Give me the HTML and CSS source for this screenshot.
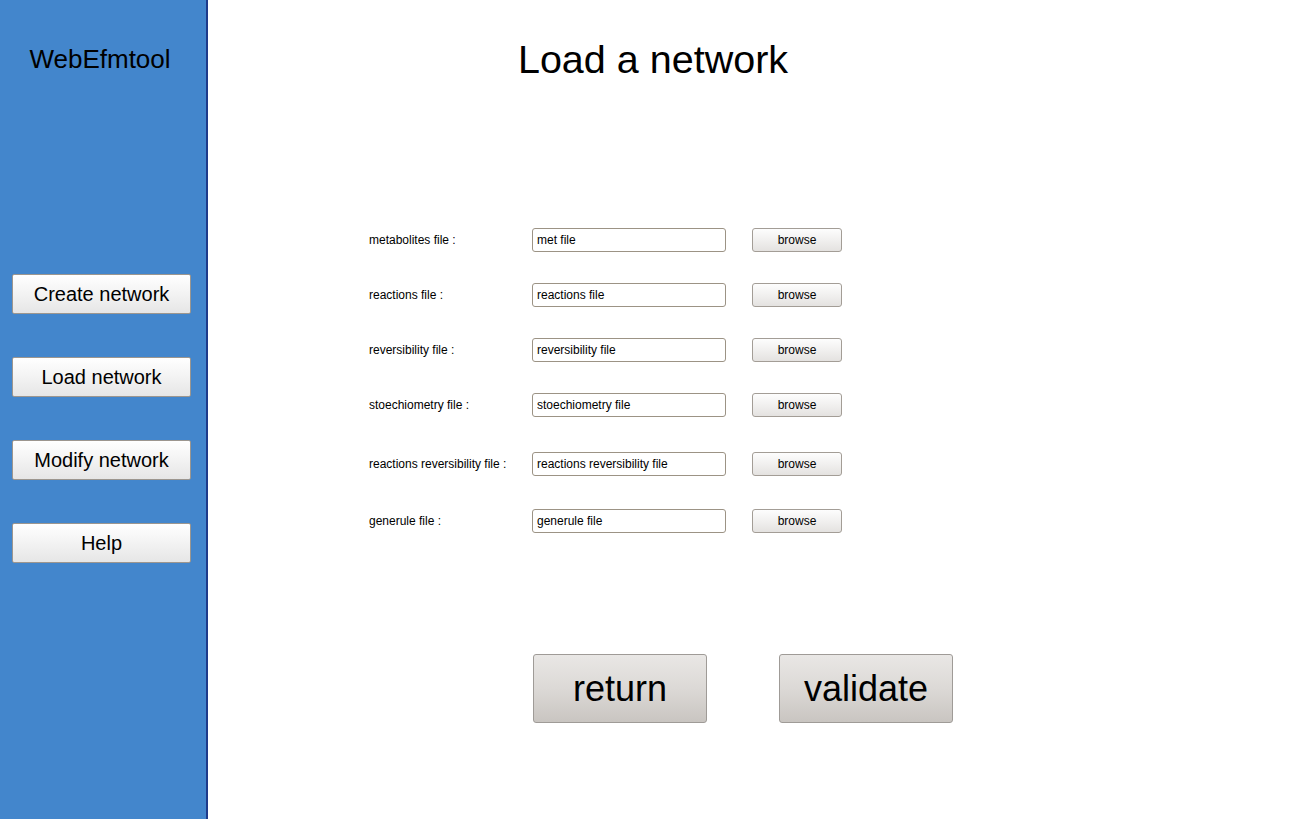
FILE: index.html
```html
<!DOCTYPE html>
<html lang="en">

<head>
    <meta charset="UTF-8">
    <meta name="viewport" content="width=device-width, initial-scale=1.0">
    <title>WebEfmtool - Load a network</title>
    <link rel="stylesheet" href="styles.css">
</head>

<body>
    <div class="page">
        <div class="sidebar">
            <p class="logo">WebEfmtool</p>
            <div class="nav">
                <button class="nav-btn" type="button">Create network</button>
                <button class="nav-btn" type="button">Load network</button>
                <button class="nav-btn" type="button">Modify network</button>
                <button class="nav-btn" type="button">Help</button>
            </div>
        </div>
        <div class="content">
            <h1 class="page-title">Load a network</h1>
            <form class="load-form">
                <div class="form-row">
                    <label class="field-label" for="met">metabolites file :</label>
                    <input id="met" class="field-input" type="text" value="met file">
                    <button class="browse" type="button">browse</button>
                </div>
                <div class="form-row">
                    <label class="field-label" for="reac">reactions file :</label>
                    <input id="reac" class="field-input" type="text" value="reactions file">
                    <button class="browse" type="button">browse</button>
                </div>
                <div class="form-row">
                    <label class="field-label" for="rev">reversibility file :</label>
                    <input id="rev" class="field-input" type="text" value="reversibility file">
                    <button class="browse" type="button">browse</button>
                </div>
                <div class="form-row">
                    <label class="field-label" for="sto">stoechiometry file :</label>
                    <input id="sto" class="field-input" type="text" value="stoechiometry file">
                    <button class="browse" type="button">browse</button>
                </div>
                <div class="form-row gap-wide">
                    <label class="field-label" for="rrev">reactions reversibility file :</label>
                    <input id="rrev" class="field-input" type="text" value="reactions reversibility file">
                    <button class="browse" type="button">browse</button>
                </div>
                <div class="form-row gap-mid">
                    <label class="field-label" for="gene">generule file :</label>
                    <input id="gene" class="field-input" type="text" value="generule file">
                    <button class="browse" type="button">browse</button>
                </div>
            </form>
            <div class="actions">
                <button class="big-btn" type="button">return</button>
                <button class="big-btn" type="button">validate</button>
            </div>
        </div>
    </div>
</body>

</html>
```

FILE: styles.css
```css
* {
    margin: 0;
    padding: 0;
    box-sizing: border-box;
}

body {
    font-family: "Liberation Sans", Arial, sans-serif;
    color: #000;
    background: #fff;
}

.page {
    display: flex;
    min-height: 100vh;
}

/* ---------- sidebar ---------- */

.sidebar {
    width: 208px;
    flex-shrink: 0;
    background: #4386cc;
    border-right: 2px solid #1f3b8a;
}

.sidebar .logo {
    padding: 44px 6px 0 0;
    height: 74px;
    font-size: 26px;
    line-height: 30px;
    text-align: center;
}

.sidebar .nav {
    display: flex;
    flex-direction: column;
    gap: 43px;
    margin-top: 200px;
    padding-left: 12px;
}

.nav-btn {
    width: 179px;
    height: 40px;
    font-family: inherit;
    font-size: 20px;
    color: #000;
    border: 1px solid #9c968f;
    border-radius: 2px;
    background: linear-gradient(#ffffff, #f4f4f4 45%, #e6e6e6);
    cursor: pointer;
}

/* ---------- content ---------- */

.content {
    flex: 1;
    padding-top: 36px;
}

.page-title {
    width: 890px;
    font-size: 39.5px;
    font-weight: normal;
    line-height: 46px;
    text-align: center;
}

.load-form {
    margin: 146px 0 0 161px;
}

.form-row {
    display: flex;
    align-items: center;
    height: 24px;
}

.form-row + .form-row {
    margin-top: 31px;
}

.form-row.gap-wide {
    margin-top: 35px;
}

.form-row.gap-mid {
    margin-top: 33px;
}

.field-label {
    width: 163px;
    font-size: 12px;
}

.field-input {
    width: 194px;
    height: 24px;
    margin-right: 26px;
    padding: 0 4px;
    font-family: inherit;
    font-size: 12px;
    color: #000;
    border: 1px solid #9c9385;
    border-radius: 3px;
    outline: none;
}

.browse {
    width: 90px;
    height: 24px;
    font-family: inherit;
    font-size: 12px;
    color: #000;
    border: 1px solid #a39d96;
    border-radius: 3px;
    background: linear-gradient(#fdfdfd, #f1f0ef 50%, #e4e2e0);
    cursor: pointer;
}

.actions {
    display: flex;
    gap: 72px;
    margin: 121px 0 0 325px;
}

.big-btn {
    width: 174px;
    height: 69px;
    font-family: inherit;
    font-size: 36px;
    color: #000;
    border: 1px solid #9f9b97;
    border-radius: 3px;
    background: linear-gradient(#e9e7e5, #dcd9d6 50%, #c9c5c1);
    cursor: pointer;
}
```
